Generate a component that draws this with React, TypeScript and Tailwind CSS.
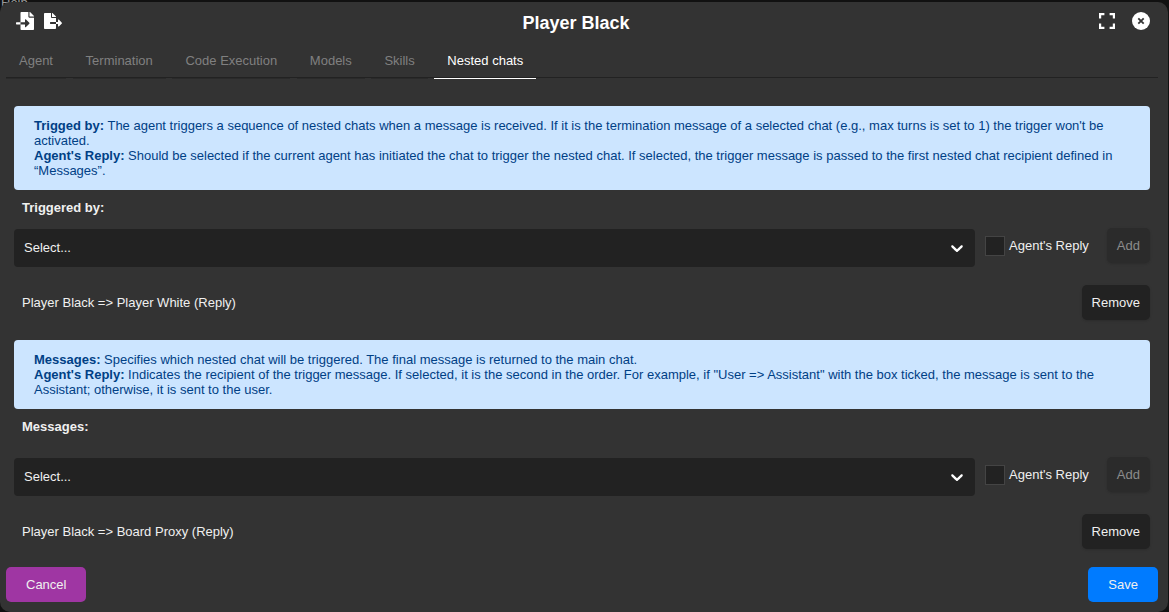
import { Fragment } from "react";
import type { ReactNode } from "react";
import { FaFileExport, FaFileImport } from "react-icons/fa";

const tabs = ["Agent", "Termination", "Code Execution", "Models", "Skills", "Nested chats"];

function Note({ children }: { children: ReactNode }) {
  return <div className="rounded bg-[#cce5ff] px-5 py-3 leading-[15px] text-[#004085]">{children}</div>;
}

function Picker({ id, label }: { id: string; label: string }) {
  return (
    <div className="flex items-start">
      <div className="relative min-w-0 flex-1">
        <select
          id={id}
          aria-label={label}
          className="h-[38px] w-full appearance-none rounded bg-[#222] px-[10px] pb-[2px] text-[#f0f0f0]"
        >
          <option>Select...</option>
        </select>
        <svg
          viewBox="0 0 20 20"
          className="pointer-events-none absolute right-2 top-[9px] size-5 fill-white"
          aria-hidden="true"
        >
          <path d="M4.516 7.548c0.436-0.446 1.043-0.481 1.576 0l3.908 3.747 3.908-3.747c0.533-0.481 1.141-0.446 1.574 0 0.436 0.445 0.408 1.197 0 1.615-0.406 0.418-4.695 4.502-4.695 4.502-0.217 0.223-0.502 0.335-0.787 0.335s-0.57-0.112-0.789-0.335c0 0-4.287-4.084-4.695-4.502s-0.436-1.17 0-1.615z" />
        </svg>
      </div>
      <label className="ml-[10px] mt-[7px] flex items-start gap-1">
        <input type="checkbox" className="size-5 appearance-none border border-[#444] bg-[#222] checked:bg-[#007bff]" />
        <span className="leading-[19px]">Agent&apos;s Reply</span>
      </label>
      <button
        disabled
        className="-mt-px ml-[18px] h-[35px] rounded-[5px] bg-[#2b2b2b] px-[10px] text-[#8c8c8c] shadow-sm"
      >
        Add
      </button>
    </div>
  );
}

function ChatRow({ name }: { name: string }) {
  return (
    <div className="flex items-center justify-between pl-2">
      <span>{name}</span>
      <button className="h-[35px] rounded-[5px] bg-[#222] px-[10px] shadow-sm">Remove</button>
    </div>
  );
}

export default function App() {
  return (
    <div className="relative overflow-hidden bg-[#111] pr-px pt-[2px] font-['Liberation_Sans',sans-serif] text-[13px] leading-[15px] text-[#f0f0f0]">
      <div className="absolute left-px -top-[5px] text-[#999]" aria-hidden="true">
        Help
      </div>
      <div className="relative rounded-[10px] bg-[#333] pb-[10px] pl-[6px] pr-[10px]">
        <header className="flex h-[41px] items-center">
          <div className="flex flex-1 items-center gap-[10px] pb-[3px] pl-[10px] text-white">
            <button aria-label="Import">
              <FaFileImport size={18} />
            </button>
            <button aria-label="Export">
              <FaFileExport size={18} />
            </button>
          </div>
          <h1 className="mr-[14px] text-[18px] font-bold leading-5 text-white">Player Black</h1>
          <div className="flex flex-1 items-center justify-end gap-[17px] pb-[3px] pr-2 text-white">
            <button aria-label="Full screen">
              <svg viewBox="0 0 16 16" className="size-4" fill="none" stroke="currentColor" strokeWidth="2.2" aria-hidden="true">
                <path d="M1.1 5.4V1.1h4.3M10.6 1.1h4.3v4.3M14.9 10.6v4.3h-4.3M5.4 14.9H1.1v-4.3" />
              </svg>
            </button>
            <button aria-label="Close">
              <svg viewBox="0 0 18 18" className="size-[18px]" aria-hidden="true">
                <circle cx="9" cy="9" r="9" fill="currentColor" />
                <path d="M6.3 6.3l5.4 5.4M11.7 6.3l-5.4 5.4" stroke="#333" strokeWidth="1.8" />
              </svg>
            </button>
          </div>
        </header>
        <nav className="h-[35px] whitespace-nowrap border-b border-[#222]" role="tablist">
          {tabs.map((tab) => {
            const active = tab === "Nested chats";
            return (
              <Fragment key={tab}>
                <button
                  role="tab"
                  aria-selected={active}
                  className={
                    active
                      ? "mr-[3px] h-9 border-b border-white px-[13px] text-white"
                      : "mr-[3px] h-9 border-b border-[#2a2a2a] px-[13px] text-[#808080]"
                  }
                >
                  {tab}
                </button>{" "}
              </Fragment>
            );
          })}
        </nav>
        <main className="px-2 pt-7">
          <Note>
            <p>
              <b>Trigged by:</b> The agent triggers a sequence of nested chats when a message is received. If it is the
              termination message of a selected chat (e.g., max turns is set to 1) the trigger won&apos;t be activated.
            </p>
            <p>
              <b>Agent&apos;s Reply:</b> Should be selected if the current agent has initiated the chat to trigger the
              nested chat. If selected, the trigger message is passed to the first nested chat recipient defined in
              “Messages”.
            </p>
          </Note>
          <h2 className="mb-[14px] ml-2 mt-[10px] font-bold">Triggered by:</h2>
          <Picker id="triggered-by" label="Triggered by" />
          <div className="mb-5 mt-[18px]">
            <ChatRow name="Player Black => Player White (Reply)" />
          </div>
          <Note>
            <p>
              <b>Messages:</b> Specifies which nested chat will be triggered. The final message is returned to the main
              chat.
            </p>
            <p>
              <b>Agent&apos;s Reply:</b> Indicates the recipient of the trigger message. If selected, it is the second in
              the order. For example, if &quot;User =&gt; Assistant&quot; with the box ticked, the message is sent to the
              Assistant; otherwise, it is sent to the user.
            </p>
          </Note>
          <h2 className="mb-6 ml-2 mt-[10px] font-bold">Messages:</h2>
          <Picker id="messages" label="Messages" />
          <div className="mb-[18px] mt-[18px]">
            <ChatRow name="Player Black => Board Proxy (Reply)" />
          </div>
        </main>
        <footer className="flex justify-between">
          <button className="h-[35px] rounded-[5px] bg-[#9f36a3] px-5">Cancel</button>
          <button className="h-[35px] rounded-[5px] bg-[#007bff] px-5">Save</button>
        </footer>
      </div>
    </div>
  );
}
